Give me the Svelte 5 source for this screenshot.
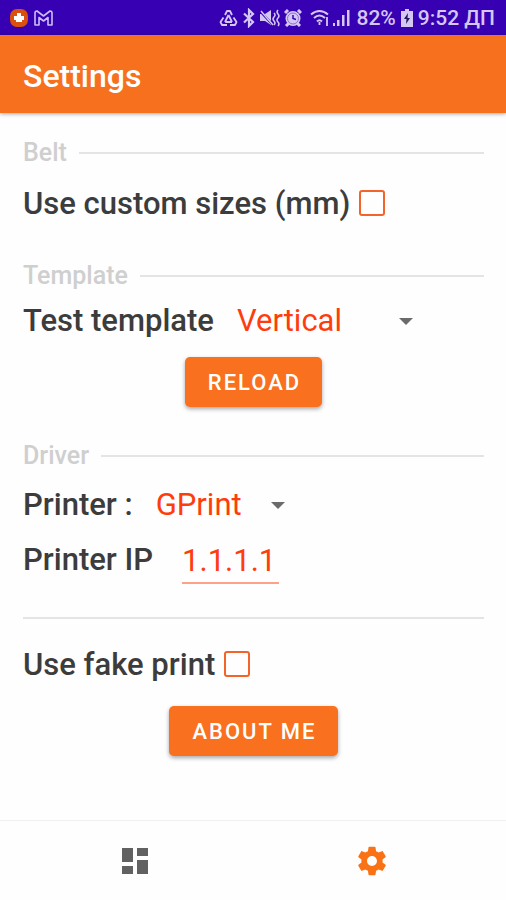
<script lang="ts">
	let customSizes = $state(false);
	let template = $state('Vertical');
	let printer = $state('GPrint');
	let printerIp = $state('1.1.1.1');
	let fakePrint = $state(false);
</script>

<div class="screen">
	<div class="status-bar">
		<div class="status-group">
			<svg width="20" height="20" viewBox="0 0 20 20" aria-hidden="true">
				<rect x="1" y="1" width="18" height="18" rx="7" fill="#d9500f" />
				<path d="M8 5h4v3h3v4h-2v2H7v-2H5V8h3z" fill="#fff" />
			</svg>
			<svg class="mail" width="19" height="16" viewBox="0 0 19 16" fill="none" stroke="#cdbdf5" stroke-width="1.6" stroke-linejoin="round" aria-hidden="true">
				<path d="M1 3q0-2 2-2l6.500 5L16 1q2 0 2 2v12h-4V7.500L9.500 11 5 7.500V15H1z" />
			</svg>
		</div>
		<div class="status-group status-right">
			<svg width="19" height="18" viewBox="0 0 19 18" fill="none" stroke="currentColor" stroke-width="1.800" stroke-linejoin="round" aria-hidden="true">
				<path d="M6 6l2-4h3l2 4M4.500 8.500L1.500 13l1.500 3h5M14.500 8.500l3 4.500-1.500 3h-5M9.500 6L6 13M9.500 6l3.500 7M6 13h7" />
			</svg>
			<svg class="bluetooth" width="14" height="20" viewBox="0 0 14 20" fill="none" stroke="currentColor" stroke-width="2.200" aria-hidden="true">
				<path d="M2 5.500l9 8.500-4 4V2l4 4-9 8.500" />
			</svg>
			<svg class="mute" width="20" height="18" viewBox="0 0 20 18" fill="currentColor" aria-hidden="true">
				<path d="M0 5h5l6-4v15l-6-4H0z" />
				<path d="M0 2l13 14" fill="none" stroke="#3700b3" stroke-width="2.500" />
				<path d="M1 2l12 14" fill="none" stroke="currentColor" stroke-width="1.500" />
				<path d="M14 4q2 2 0 4t0 4 0 4M18 1q-2 2 0 4t0 4 0 4 0 4" fill="none" stroke="currentColor" stroke-width="1.500" />
			</svg>
			<svg class="alarm" width="18" height="18" viewBox="0 0 18 18" fill="none" aria-hidden="true">
				<path d="M1 4l3-3M17 4l-3-3M2 17l3-3M16 17l-3-3" stroke="currentColor" stroke-width="3" />
				<circle cx="9" cy="9.500" r="7.500" fill="currentColor" />
				<circle cx="9" cy="9.500" r="5.500" stroke="#8d6fd6" />
				<path d="M9 6v3.500l3 1" stroke="#3700b3" stroke-width="1.500" />
			</svg>
			<svg class="wifi" width="20" height="18" viewBox="0 0 20 18" fill="none" stroke="currentColor" stroke-width="2" aria-hidden="true">
				<path d="M1 5.500q8.500-7 17 0M4 9q5.500-5 11 0M7 12.500q2.500-2.500 5 0" />
				<path d="M9.500 13v3M17 8v9" stroke-width="1.800" />
			</svg>
			<svg width="18" height="18" viewBox="0 0 18 18" fill="currentColor" aria-hidden="true">
				<path d="M0 14h2v3H0zM4 11h2.500v6H4zM9 6h2.500v11H9zM14 1h2.500v16H14z" />
			</svg>
			<span class="battery-level">82%</span>
			<svg class="battery" width="12" height="18" viewBox="0 0 12 18" aria-hidden="true">
				<path d="M4 0h4v2h4v16H0V2h4z" fill="currentColor" />
				<path d="M7 4L3 10h2.500L5 15l4-6H6.500z" fill="#22155c" />
			</svg>
			<span>9:52 ДП</span>
		</div>
	</div>

	<header class="app-bar">
		<h1>Settings</h1>
	</header>

	<main>
		<section>
			<h2>Belt</h2>
			<div class="row custom-sizes">
				<label for="custom-sizes">Use custom sizes (mm)</label>
				<input id="custom-sizes" type="checkbox" bind:checked={customSizes} />
			</div>
		</section>

		<section class="template">
			<h2>Template</h2>
			<div class="row">
				<label for="template">Test template</label>
				<div class="select select-template">
					<select id="template" bind:value={template}>
						<option>Vertical</option>
						<option>Horizontal</option>
					</select>
				</div>
			</div>
			<button class="action" type="button">RELOAD</button>
		</section>

		<section class="driver">
			<h2>Driver</h2>
			<div class="row">
				<label for="printer">Printer :</label>
				<div class="select select-printer">
					<select id="printer" bind:value={printer}>
						<option>GPrint</option>
					</select>
				</div>
			</div>
			<div class="row printer-ip">
				<label for="printer-ip">Printer IP</label>
				<input id="printer-ip" type="text" bind:value={printerIp} />
			</div>
		</section>

		<hr />

		<div class="row">
			<label for="fake-print">Use fake print</label>
			<input id="fake-print" type="checkbox" bind:checked={fakePrint} />
		</div>
		<button class="action about" type="button">ABOUT ME</button>
	</main>

	<nav>
		<a href="#dashboard" aria-label="Dashboard">
			<svg width="26" height="26" viewBox="0 0 26 26" fill="#616161" aria-hidden="true">
				<path d="M0 0h11v14H0zM15 0h11v8H15zM0 18h11v8H0zM15 12h11v14H15z" />
			</svg>
		</a>
		<a href="#settings" aria-label="Settings" aria-current="page">
			<svg width="34" height="34" viewBox="0 0 24 24" fill="#f97316" aria-hidden="true">
				<path d="M19.430 12.980c.04-.32.07-.64.07-.98s-.03-.66-.07-.98l2.110-1.650c.19-.15.24-.42.12-.64l-2-3.460c-.12-.22-.39-.3-.61-.22l-2.490 1c-.52-.4-1.080-.73-1.690-.98l-.38-2.650C14.460 2.180 14.250 2 14 2h-4c-.25 0-.46.18-.49.42l-.38 2.650c-.61.25-1.170.59-1.690.98l-2.490-1c-.23-.09-.49 0-.61.22l-2 3.460c-.13.22-.07.49.12.64l2.110 1.650c-.04.32-.07.65-.07.98s.03.66.07.98l-2.110 1.650c-.19.15-.24.42-.12.64l2 3.460c.12.22.39.3.61.22l2.490-1c.52.4 1.080.73 1.690.98l.38 2.650c.03.24.24.42.49.42h4c.25 0 .46-.18.49-.42l.38-2.650c.61-.25 1.170-.59 1.690-.98l2.490 1c.23.09.49 0 .61-.22l2-3.460c.12-.22.07-.49-.12-.64l-2.110-1.650zM12 15.500c-1.930 0-3.500-1.570-3.500-3.500s1.570-3.500 3.500-3.500 3.500 1.570 3.500 3.500-1.570 3.500-3.500 3.500z" />
			</svg>
		</a>
	</nav>
</div>

<style>
	:global(body) {
		margin: 0;
		background: #fefefe;
	}

	.screen {
		display: flex;
		flex-direction: column;
		min-height: 100vh;
		font-family: Roboto, sans-serif;
		color: #3c3c3c;
	}

	.status-bar {
		display: flex;
		align-items: center;
		justify-content: space-between;
		height: 35px;
		padding: 0 11px 0 9px;
		background: #3700b3;
		color: #d4c8f2;
		font-size: 21px;
		font-weight: 500;
		line-height: 24px;
		white-space: nowrap;
	}

	.status-group {
		display: flex;
		align-items: center;
	}

	.bluetooth,
	.alarm,
	.mute {
		margin-left: 4px;
	}

	.mail,
	.battery-level,
	.battery {
		margin-left: 5px;
	}

	.wifi {
		margin: 0 3px 0 8px;
	}

	.battery {
		margin-right: 5px;
	}

	.app-bar {
		display: flex;
		align-items: center;
		height: 78px;
		padding: 0 23px;
		background: #f7701d;
		box-shadow: 0 1px 4px rgb(0 0 0 / 0.35);
	}

	h1 {
		margin: 0;
		padding-top: 3px;
		color: #fff;
		font-size: 32px;
		font-weight: 500;
		line-height: 40px;
	}

	main {
		flex: 1;
		display: flex;
		flex-direction: column;
		padding: 25px 22px 24px 23px;
	}

	section {
		display: flex;
		flex-direction: column;
	}

	h2 {
		display: flex;
		align-items: center;
		gap: 12px;
		margin: 0 0 10px;
		color: #cfcfcf;
		font-size: 25px;
		font-weight: 500;
		line-height: 30px;
	}

	h2::after {
		content: '';
		flex: 1;
		height: 2px;
		background: #e4e4e4;
	}

	.row {
		display: flex;
		align-items: center;
		min-height: 40px;
		font-size: 31px;
		font-weight: 500;
		line-height: 40px;
	}

	.custom-sizes {
		margin-top: 6px;
	}

	.template {
		margin-top: 37px;
	}

	.driver {
		margin-top: 34px;
	}

	.driver h2 {
		margin-bottom: 14px;
	}

	input[type='checkbox'] {
		appearance: none;
		box-sizing: border-box;
		width: 26px;
		height: 26px;
		margin: 0 0 3px 9px;
		border: 2px solid #f4642a;
		border-radius: 3px;
	}

	input[type='checkbox']:checked {
		background: #f4642a;
	}

	.select {
		display: flex;
		align-items: center;
		margin-left: 23px;
	}

	.select::after {
		content: '';
		margin-left: -14px;
		border: 7px solid transparent;
		border-top-color: #6b6b6b;
		border-bottom: 0;
		pointer-events: none;
	}

	select,
	input[type='text'] {
		box-sizing: border-box;
		margin: 0;
		padding: 0;
		border: 0;
		background: transparent;
		color: #ff3d0c;
		font: inherit;
		font-weight: 400;
	}

	select {
		appearance: none;
		height: 40px;
	}

	.select-template select {
		width: 176px;
	}

	.select-printer select {
		width: 129px;
	}

	.printer-ip {
		align-items: flex-start;
		margin-top: 15px;
	}

	input[type='text'] {
		width: 97px;
		height: 44px;
		margin-left: 29px;
		padding-bottom: 2px;
		border-bottom: 2px solid #ffa088;
	}

	hr {
		width: 100%;
		height: 2px;
		margin: 33px 0 26px;
		border: 0;
		background: #e4e4e4;
	}

	.action {
		align-self: center;
		height: 50px;
		margin: 16px 0 0;
		padding: 2px 21px 0 23px;
		border: 0;
		border-radius: 5px;
		background: #f9701e;
		box-shadow: 0 2px 4px rgb(0 0 0 / 0.35);
		color: #fff;
		font: 500 22px/28px Roboto, sans-serif;
		letter-spacing: 2px;
	}

	.about {
		margin-top: 21px;
	}

	nav {
		display: flex;
		justify-content: center;
		height: 79px;
		border-top: 1px solid #f0f0f0;
	}

	nav a {
		flex: 1;
		display: flex;
		align-items: center;
		justify-content: center;
		max-width: 237px;
	}
</style>
